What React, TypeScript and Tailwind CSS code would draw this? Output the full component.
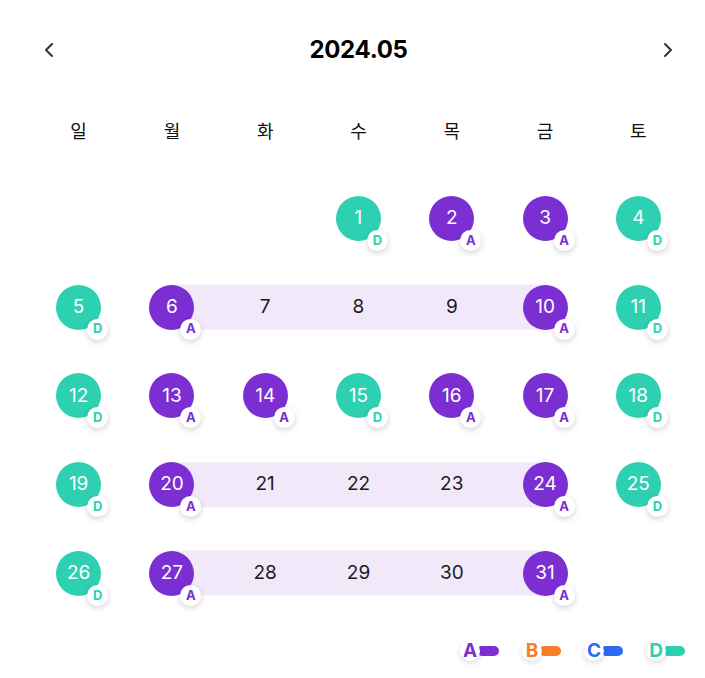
import { ChevronLeft, ChevronRight } from 'lucide-react';

type Kind = 'A' | 'D' | null;
type Range = 'start' | 'mid' | 'end' | null;

interface Day {
  n: number | null;
  kind?: Kind;
  range?: Range;
}

const weekdays = ['일', '월', '화', '수', '목', '금', '토'];

const d = (n: number, kind: Kind = null, range: Range = null): Day => ({ n, kind, range });
const empty: Day = { n: null };

const weeks: Day[][] = [
  [empty, empty, empty, d(1, 'D'), d(2, 'A'), d(3, 'A'), d(4, 'D')],
  [d(5, 'D'), d(6, 'A', 'start'), d(7, null, 'mid'), d(8, null, 'mid'), d(9, null, 'mid'), d(10, 'A', 'end'), d(11, 'D')],
  [d(12, 'D'), d(13, 'A'), d(14, 'A'), d(15, 'D'), d(16, 'A'), d(17, 'A'), d(18, 'D')],
  [d(19, 'D'), d(20, 'A', 'start'), d(21, null, 'mid'), d(22, null, 'mid'), d(23, null, 'mid'), d(24, 'A', 'end'), d(25, 'D')],
  [d(26, 'D'), d(27, 'A', 'start'), d(28, null, 'mid'), d(29, null, 'mid'), d(30, null, 'mid'), d(31, 'A', 'end'), empty],
];

const legend = [
  { label: 'A', text: 'text-[#7b2fd3]', bar: 'bg-[#7b2fd3]' },
  { label: 'B', text: 'text-[#fb7d2a]', bar: 'bg-[#fb7d2a]' },
  { label: 'C', text: 'text-[#2f6af0]', bar: 'bg-[#2f6af0]' },
  { label: 'D', text: 'text-[#2dd1b1]', bar: 'bg-[#2dd1b1]' },
];

function DayCell({ day }: { day: Day }) {
  if (day.n === null) return <div className="h-[88.75px]" />;
  return (
    <div className="relative flex h-[88.75px] items-center justify-center">
      {/* range strip behind the dates */}
      {day.range === 'start' && <div className="absolute left-1/2 right-0 top-1/2 h-[45px] -translate-y-1/2 bg-[#f1e9fa]" />}
      {day.range === 'mid' && <div className="absolute left-0 right-0 top-1/2 h-[45px] -translate-y-1/2 bg-[#f1e9fa]" />}
      {day.range === 'end' && <div className="absolute left-0 right-1/2 top-1/2 h-[45px] -translate-y-1/2 bg-[#f1e9fa]" />}

      {day.kind ? (
        <div
          className={`relative flex h-[45px] w-[45px] items-center justify-center rounded-full text-[19px] text-white ${
            day.kind === 'A' ? 'bg-[#7b2fd3]' : 'bg-[#2dd1b1]'
          }`}
        >
          {day.n}
          <span
            className={`absolute -bottom-[10px] -right-[7px] flex h-[21px] w-[21px] items-center justify-center rounded-full bg-white text-[13px] font-bold shadow-[0_2px_6px_rgba(0,0,0,0.18)] ${
              day.kind === 'A' ? 'text-[#7b2fd3]' : 'text-[#2dd1b1]'
            }`}
          >
            {day.kind}
          </span>
        </div>
      ) : (
        <span className="relative text-[19px] text-[#1a1a1a]">{day.n}</span>
      )}
    </div>
  );
}

export default function App() {
  return (
    <div className="h-[678px] w-[705px] bg-white pl-[32px] pr-[20px] font-['Inter','Noto_Sans_CJK_KR',sans-serif]">
      {/* Header */}
      <div className="mt-[28px] flex h-[44px] items-center justify-between px-[5px]">
        <ChevronLeft className="h-6 w-6 text-[#333]" strokeWidth={2} />
        <h1 className="text-[24px] font-bold tracking-[-0.3px] text-black">2024.05</h1>
        <ChevronRight className="h-6 w-6 text-[#333]" strokeWidth={2} />
      </div>

      {/* Weekdays */}
      <div className="mt-[38px] grid h-[40px] grid-cols-7 items-center font-['Noto_Sans_CJK_KR',sans-serif] text-[18px] text-[#111]">
        {weekdays.map((w) => (
          <div key={w} className="text-center">
            {w}
          </div>
        ))}
      </div>

      {/* Days */}
      <div className="mt-[24px] grid grid-cols-7">
        {weeks.flat().map((day, i) => (
          <DayCell key={i} day={day} />
        ))}
      </div>

      {/* Legend */}
      <div className="mt-[23px] flex justify-end gap-[23px]">
        {legend.map((l) => (
          <div key={l.label} className="flex items-center">
            <span
              className={`relative z-10 flex h-5 w-5 items-center justify-center rounded-full bg-white text-[19px] font-bold shadow-[0_2px_6px_rgba(0,0,0,0.15)] ${l.text}`}
            >
              {l.label}
            </span>
            <span className={`-ml-[3px] h-[10px] w-[22px] rounded-full ${l.bar}`} />
          </div>
        ))}
      </div>
    </div>
  );
}
